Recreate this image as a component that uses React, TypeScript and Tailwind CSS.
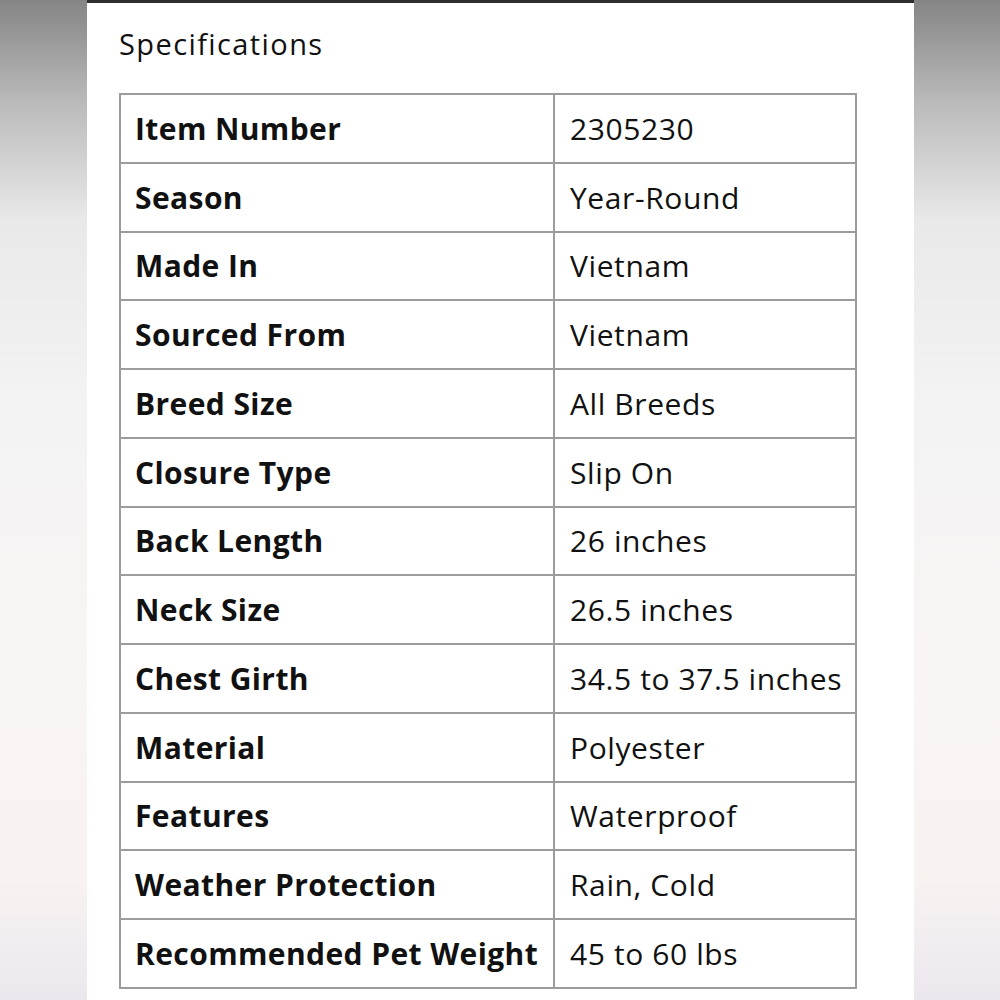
const specs: [string, string][] = [
  ["Item Number", "2305230"],
  ["Season", "Year-Round"],
  ["Made In", "Vietnam"],
  ["Sourced From", "Vietnam"],
  ["Breed Size", "All Breeds"],
  ["Closure Type", "Slip On"],
  ["Back Length", "26 inches"],
  ["Neck Size", "26.5 inches"],
  ["Chest Girth", "34.5 to 37.5 inches"],
  ["Material", "Polyester"],
  ["Features", "Waterproof"],
  ["Weather Protection", "Rain, Cold"],
  ["Recommended Pet Weight", "45 to 60 lbs"],
];

export default function App() {
  return (
    <div className="h-[1000px] w-[1000px] overflow-hidden bg-[linear-gradient(180deg,#858585_0%,#b9b9b9_10%,#e9e9e9_22%,#f3f3f3_40%,#f9f5f4_70%,#f8f2f1_88%,#ebe7ee_100%)] font-['Open_Sans',sans-serif] text-[#111]">
      <div className="ml-[87px] h-full w-[827px] border-t-[3px] border-[#2e2e2e] bg-white pl-8 pt-[24px]">
        <h2 className="text-[29px] leading-[34px] tracking-[1.4px]">Specifications</h2>
        <table className="mt-[32px] w-[738px] table-fixed border-collapse">
          <tbody>
            {specs.map(([label, value]) => (
              <tr key={label} className="h-[68.75px]">
                <td className="w-[434px] border-2 border-[#9c9c9c] pl-[14px] text-[30px] font-bold tracking-[0.4px]">
                  {label}
                </td>
                <td className="border-2 border-[#9c9c9c] pl-[15px] text-[30px] tracking-[0.6px]">
                  {value}
                </td>
              </tr>
            ))}
          </tbody>
        </table>
      </div>
    </div>
  );
}
